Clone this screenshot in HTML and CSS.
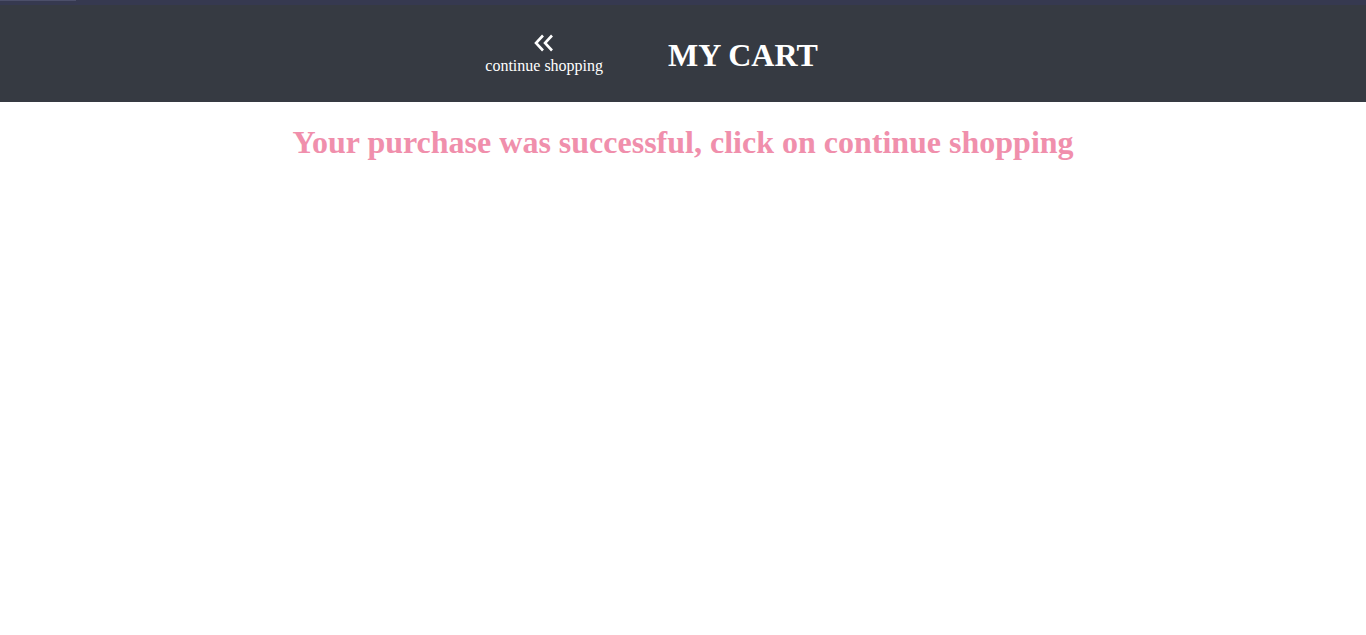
FILE: index.html
```html
<!DOCTYPE html>
<html>
<head>
<meta charset="utf-8">
<link rel="stylesheet" href="styles.css">
</head>
<body>
<header class="topbar">
  <div class="strip"><span class="strip-line"></span></div>
  <div class="bar">
    <a class="back" href="#">
      <svg class="back-icon" width="22" height="18" viewBox="0 0 22 18"><polyline points="10,1.5 3,9 10,16.5" fill="none" stroke="#fff" stroke-width="2.6"/><polyline points="19,1.5 12,9 19,16.5" fill="none" stroke="#fff" stroke-width="2.6"/></svg>
      <span class="back-text">continue shopping</span>
    </a>
    <h1 class="title">MY CART</h1>
  </div>
</header>
<main class="content">
  <h2 class="msg">Your purchase was successful, click on continue shopping</h2>
</main>
</body>
</html>
```

FILE: styles.css
```css
html, body {
  margin: 0;
  padding: 0;
  background: #fff;
  font-family: "Liberation Serif", "Times New Roman", serif;
}
.topbar {
  background: #363a42;
  height: 102px;
  display: flex;
  flex-direction: column;
}
.strip {
  height: 5px;
  background: #363950;
}
.strip-line {
  display: block;
  width: 76px;
  height: 1px;
  background: #4c4f6a;
}
.bar {
  flex: 1;
  display: flex;
  align-items: center;
  justify-content: center;
  gap: 65px;
  padding-right: 63px;
}
.back {
  display: flex;
  flex-direction: column;
  align-items: center;
  color: #fff;
  text-decoration: none;
  padding-top: 1px;
}
.back-icon {
  display: block;
  margin-bottom: 5px;
}
.back-text {
  font-size: 16px;
  line-height: 18px;
}
.title {
  margin: 0;
  color: #fff;
  font-size: 32px;
  font-weight: bold;
  line-height: 40px;
  margin-top: 2px;
}
.content {
  display: flex;
  justify-content: center;
}
.msg {
  margin: 22px 0 0;
  color: #f08fac;
  font-size: 32px;
  font-weight: bold;
  line-height: 37px;
}
```
